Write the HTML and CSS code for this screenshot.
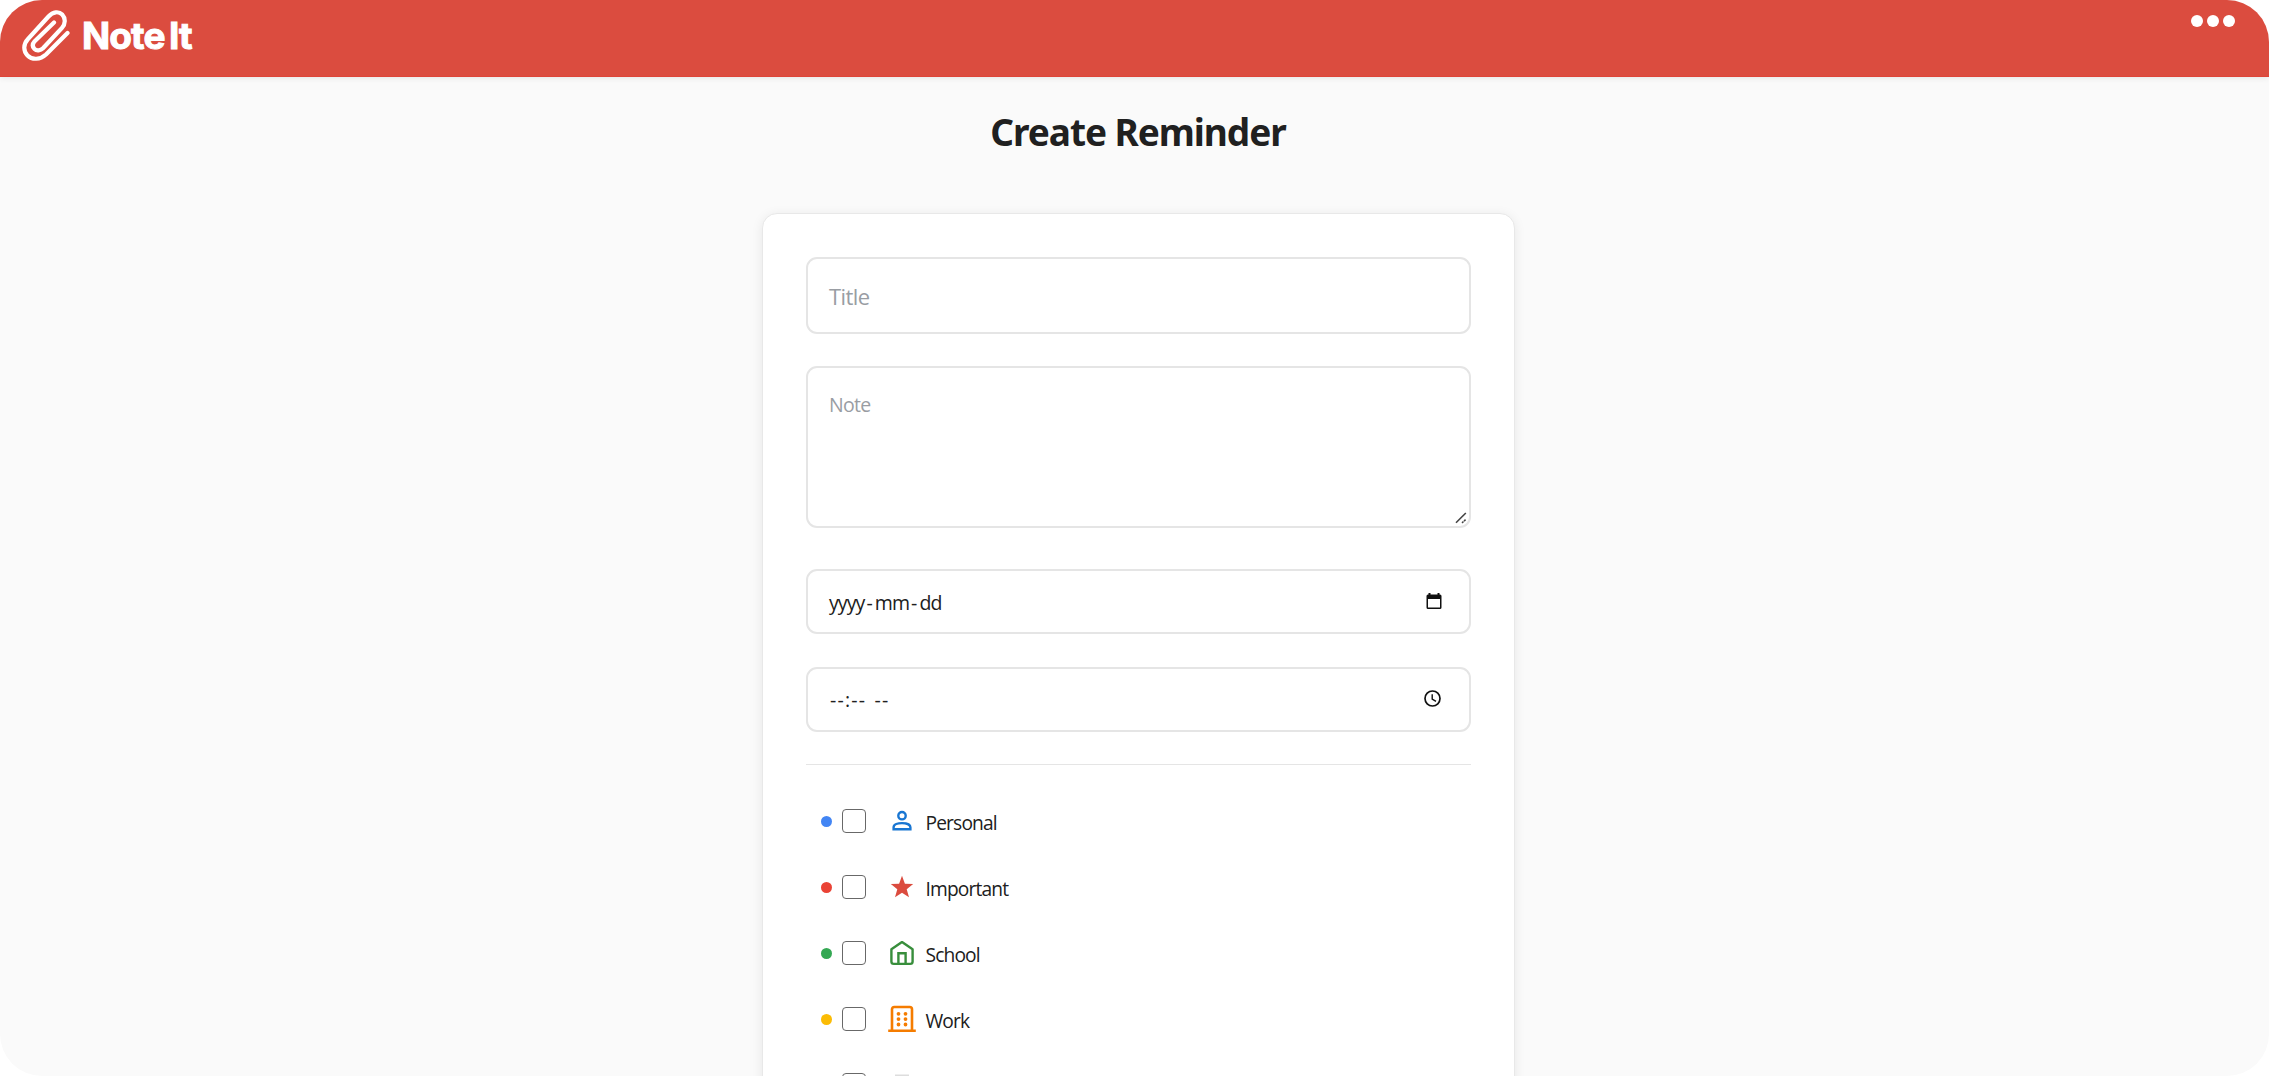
FILE: index.html
```html
<!DOCTYPE html>
<html lang="en">
<head>
<meta charset="utf-8">
<title>Note It - Create Reminder</title>
<link rel="stylesheet" href="styles.css">
</head>
<body>
<div class="app">
  <header class="topbar">
    <div class="brand">
      <svg class="clip" viewBox="0 0 50 54" fill="none" stroke="#fff" stroke-width="4.200" stroke-linecap="round" stroke-linejoin="round"><path d="M45.500 26 L24 47.500 C18 53 10 53 5.500 48.500 C1 44 1.300 37 6 32 L26.500 9.500 C31 4.500 36.800 4 40.200 7.500 C43.800 11.300 43.500 17 40 20.800 L21 41.200 C18.500 43.700 14.500 44 12.500 42 C10.200 39.700 10.400 36.800 12.700 34.200 L32 15.500"/></svg>
      <span class="brand-name">Note It</span>
    </div>
    <div class="menu"><i></i><i></i><i></i></div>
  </header>
  <main class="page">
    <h1 class="heading">Create Reminder</h1>
    <form class="card">
      <div class="field field-title"><span>Title</span></div>
      <div class="field field-note"><span>Note</span>
        <svg class="grip" viewBox="0 0 12 12" fill="none" stroke="#444" stroke-width="1.600"><path d="M1 10.800L10.800 1"/><path d="M7 10.800L10.800 7.500" stroke-dasharray="2 .700"/></svg>
      </div>
      <div class="field field-date"><span class="date"><span class="part">yyyy</span><span class="dash">-</span><span class="part">mm</span><span class="dash">-</span><span class="part">dd</span></span>
        <svg class="picker cal" viewBox="0 0 16 17"><path fill="#101010" fill-rule="evenodd" d="M2.500 0H4.500V1.500H11.500V0H13.500V1.500H14Q15.500 1.500 15.500 3V14.500Q15.500 16 14 16H2Q.5 16 .5 14.500V3Q.5 1.500 2 1.500H2.500ZM2 6V14.500H14V6Z"/></svg>
      </div>
      <div class="field field-time"><span class="time">--:-- --</span>
        <svg class="picker clock" viewBox="0 0 17 17" fill="none" stroke="#101010"><circle cx="8.500" cy="8.500" r="7.500" stroke-width="1.700"/><path d="M8.200 4.300V9L12 11.300" stroke-width="1.400"/></svg>
      </div>
      <div class="divider"></div>
      <div class="tags">
        <div class="tag"><i class="dot blue"></i><i class="box"></i>
          <svg class="icon" viewBox="0 0 28 28" fill="none" stroke="#1976d2" stroke-width="2.400"><circle cx="14" cy="8.700" r="3.700"/><path d="M5.600 22.300V20.200C5.600 17.300 10 16.100 14 16.100S22.400 17.300 22.400 20.200V22.300Z"/></svg>
          <span>Personal</span></div>
        <div class="tag"><i class="dot red"></i><i class="box"></i>
          <svg class="icon" viewBox="0 0 28 28"><path fill="#db4c3f" d="M14 2.800L16.900 10.700L25.200 11L18.700 16.200L21 24.300L14 19.700L7 24.300L9.300 16.200L2.800 11L11.100 10.700Z"/></svg>
          <span>Important</span></div>
        <div class="tag"><i class="dot green"></i><i class="box"></i>
          <svg class="icon" viewBox="0 0 28 28" fill="none" stroke="#388e3c" stroke-width="2.400" stroke-linejoin="round"><path d="M3.400 10.300L14 3.100L24.600 10.300V22.500Q24.600 24.900 22.200 24.900H5.800Q3.400 24.900 3.400 22.500Z"/><path d="M10.400 24.500V14.200H17.600V24.500" stroke-linejoin="miter"/></svg>
          <span>School</span></div>
        <div class="tag"><i class="dot yellow"></i><i class="box"></i>
          <svg class="icon" viewBox="0 0 28 28" fill="none" stroke="#f57c00" stroke-width="2.600"><path d="M.2 25.800H27.800M4 25.800V4.300Q4 2 6.300 2H21.700Q24 2 24 4.300V25.800"/><path d="M10.500 8.800V8.810M17.500 8.800V8.810M10.500 14.100V14.110M17.500 14.100V14.110M10.500 19.500V19.510M17.500 19.500V19.510" stroke-width="3.800" stroke-linecap="round"/></svg>
          <span>Work</span></div>
        <div class="tag"><i class="dot clear"></i><i class="box"></i>
          <svg class="icon" viewBox="0 0 28 28"><path fill="#ddd" d="M7 3.500H21V24H7Z"/></svg></div>
      </div>
    </form>
  </main>
</div>
</body>
</html>
```
FILE: styles.css
```css
* { box-sizing: border-box; }
body { margin: 0; background: #fff; }
.app {
  height: 1076px;
  overflow: hidden;
  border-radius: 42px;
  background: #fafafa;
  font-family: "Open Sans", "Noto Sans", sans-serif;
  color: #202020;
}
.topbar {
  height: 77px;
  display: flex;
  justify-content: space-between;
  background: #db4c3f;
  border-bottom: 1px solid #de4438;
  box-shadow: 0 1px 6px rgba(0, 0, 0, .09);
}
.brand { display: flex; padding: 7px 0 0 22px; }
.clip { width: 50px; height: 54px; }
.brand-name {
  margin-left: 10px;
  font: 700 37px/58px Inter, sans-serif;
  letter-spacing: -.9px;
  word-spacing: -3.500px;
  color: #fff;
  -webkit-text-stroke: 1px #fff;
}
.menu { display: flex; gap: 4px; padding: 15px 34px 0 0; }
.menu i { width: 12px; height: 12px; border-radius: 50%; background: #fff; }
.page { display: flex; flex-direction: column; align-items: center; padding-left: 7px; }
.heading {
  margin: 30px 0 0;
  height: 106px;
  font: 700 37px/50px "Noto Sans", sans-serif;
  letter-spacing: -1.05px;
}
.card {
  width: 753px;
  height: 900px;
  padding: 43px 43px 0;
  background: #fff;
  border: 1px solid #e8e8e8;
  border-radius: 15px;
  box-shadow: 0 2px 12px rgba(0, 0, 0, .08);
}
.field {
  display: flex;
  justify-content: space-between;
  align-items: center;
  margin-bottom: 32px;
  padding: 0 20px 0 21.500px;
  border: 2px solid #e5e5e5;
  border-radius: 11px;
  font-size: 19.500px;
  line-height: 26px;
}
.field-title { height: 77px; font-size: 22px; letter-spacing: -.6px; color: #999da3; }
.field-note {
  height: 162px;
  margin-bottom: 41px;
  padding-top: 24px;
  padding-right: 2px;
  align-items: flex-start;
  letter-spacing: -.7px;
  color: #999da3;
}
.grip { width: 12px; height: 12px; align-self: flex-end; margin-bottom: 2px; }
.field-date { height: 65px; margin-bottom: 33px; }
.field-time { height: 65px; }
.date { display: flex; padding-top: 2px; }
.part { letter-spacing: -.9px; }
.dash { width: 10.300px; text-align: center; }
.time { padding: 0 0 0 1px; letter-spacing: 1.2px; word-spacing: 2px; }
.cal { width: 16px; height: 17px; margin-right: 7px; }
.clock { width: 17px; height: 17px; margin: 0 8px 3px 0; }
.divider { height: 1px; background: #e5e5e5; }
.tags { padding: 23px 0 0 15px; }
.tag {
  height: 66px;
  display: flex;
  align-items: center;
  font-size: 19.200px;
  line-height: 28px;
  letter-spacing: -.85px;
}
.tag span { padding-top: 3px; }
.dot { width: 11px; height: 11px; border-radius: 50%; }
.blue { background: #4285f4; }
.red { background: #ea4335; }
.green { background: #34a853; }
.yellow { background: #fbbc05; }
.clear { background: transparent; }
.box { width: 24px; height: 24px; margin-left: 10px; border: 1px solid #686868; border-radius: 4px; }
.icon { width: 28px; height: 28px; margin: 0 10px 0 22px; }
```
